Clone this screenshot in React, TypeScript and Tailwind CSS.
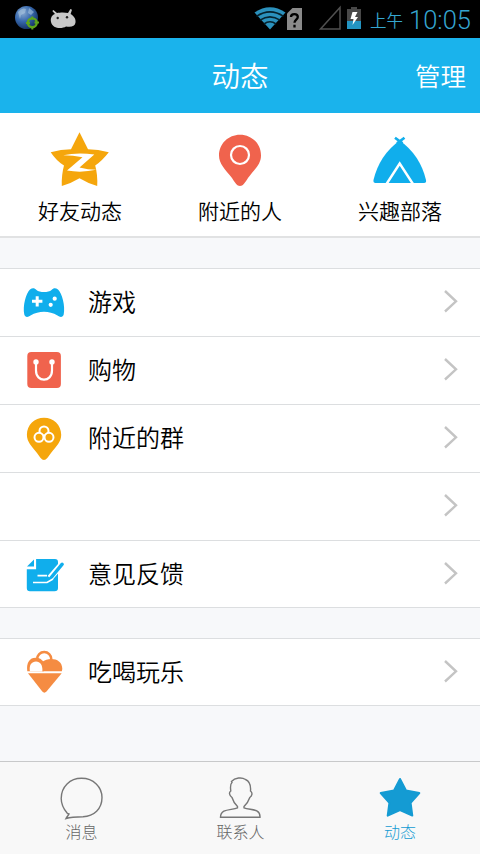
import React from "react";

type RowProps = {
  label?: string;
  icon?: React.ReactNode;
  last?: boolean;
};

const Chevron: React.FC = () => (
  <svg width="16" height="24" viewBox="0 0 16 24" fill="none" className="mr-[21px] mb-[3px]">
    <path d="M2 2 L13 12.3 L2 22.5" stroke="#c4c4c4" strokeWidth="2.4" />
  </svg>
);

const Row: React.FC<RowProps> = ({ label, icon, last }) => (
  <div
    className={`flex items-center bg-white border-b border-[#dcdee0] pl-[22px] ${
      last ? "h-[67px]" : "h-[68px]"
    }`}
  >
    <div className="w-11 h-[45px]">{icon}</div>
    <span className="ml-[22px] mb-[3px] flex-1 text-[24px] leading-[36px] text-black">{label}</span>
    <Chevron />
  </div>
);

const StatusBar: React.FC = () => (
  <div className="h-[38px] bg-black flex items-center justify-between text-[#35a6d0]">
    <svg width="80" height="38" viewBox="0 0 80 38">
      <defs>
        <radialGradient id="globe" cx="0.35" cy="0.3" r="0.75">
          <stop offset="0" stopColor="#86a8cf" />
          <stop offset="0.5" stopColor="#3768ad" />
          <stop offset="1" stopColor="#14305f" />
        </radialGradient>
      </defs>
      <circle cx="26.5" cy="17.5" r="11.5" fill="url(#globe)" />
      <path d="M18 12 q4 -5 8 -3 l-1 4 -4 2 -1 4z M29 8 l5 4 -3 3 -3 -2z" fill="#a9c4de" opacity="0.6" />
      <circle cx="32.3" cy="22.8" r="4.4" fill="none" stroke="#5ea51c" strokeWidth="2.4" />
      <path d="M26 23 h4 M34.5 22.5 h4.5 M32.3 16.5 v3 M32.3 26.5 v3" stroke="#5ea51c" strokeWidth="2" />
      {/* android head */}
      <path
        d="M51 22 C50 17 53 14.5 55 14 L52.3 11 L53.4 10 L57 13 C60 12.3 65 12.2 68 13 L70.4 9 L72 9.8 L70.6 14 C74 16 76 19 75.5 22.5 C75 26.5 71 27.5 66 26.5 C62 29 52.5 29 51 22Z"
        fill="#c8c8c8"
      />
      <circle cx="57.7" cy="18" r="1.2" fill="#222" />
      <circle cx="67" cy="17.3" r="1.2" fill="#222" />
    </svg>
    <div className="flex items-center h-full">
      <svg width="112" height="38" viewBox="252 0 112 38">
        <path d="M254.5 12.5 Q270 2 285.5 12.5 L270 29.5Z" fill="#2b91bd" />
        <path
          d="M256.5 16.3 Q270 7.5 283.5 16.3 M260 20.2 Q270 13.5 280 20.2 M264 24 Q270 19.5 276 24"
          stroke="#06222e"
          strokeWidth="1.6"
          fill="none"
        />
        <path d="M292.5 8 H302 V30 H287 V13.5Z" fill="#8a8a8a" />
        <path
          d="M291 17 C291 13.2 297.8 13.2 297.8 17 C297.8 19.6 294.5 19.8 294.5 22.8 M294.5 24.8 V27.4"
          stroke="#000"
          strokeWidth="2.3"
          fill="none"
        />
        <path d="M340 7.5 V29 H320.5Z" fill="none" stroke="#505050" strokeWidth="1.5" />
        <path d="M351 7 H357 V9 H361 V29 H347 V9 H351Z" fill="#484848" />
        <path d="M347 21 H361 V29 H347Z" fill="#2394c2" />
        <path d="M352.5 12 L350.5 19 H353.5 L352.5 25 L358 17 H355 L357.5 12Z" fill="#fff" />
      </svg>
      <span className="ml-[6px] mt-[2px] text-[16.5px] leading-[24px]">上午</span>
      <span className="ml-[6px] mr-[10px] mt-[2px] w-[61px] whitespace-nowrap font-[Roboto] text-[25.5px] leading-[36px]">
        10:05
      </span>
    </div>
  </div>
);

const ZoneStar: React.FC = () => (
  <svg width="60" height="56" viewBox="0 0 60 56">
    <path
      d="M29.5 1.2 L38 18.3 Q48 18.4 58.8 21.3 Q52 30 45.2 34.6 Q47.8 44 47.2 55 Q38 52.5 29.5 47.3 Q21 52.5 11.8 55 Q11.4 44 14 34.6 Q6.5 30 0.7 21.3 Q11 18.4 21 18.3Z"
      fill="#f5a60c"
    />
    <path
      d="M13.2 24.2 Q28 21.3 44.3 23.6 L29.5 36.4 Q38 38.5 46.3 38.8 Q32 42 17 39.6 L32.5 26.2 Q23 24.2 13.2 24.2Z"
      fill="#fff"
    />
  </svg>
);

const Pin: React.FC = () => (
  <svg width="60" height="56" viewBox="0 0 60 56">
    <path
      d="M30 55 C27 55 25 51.5 22 47 C15 38 9 33 9 24.5 C9 12.5 18.5 3.7 30 3.7 C41.5 3.7 51 12.5 51 24.5 C51 33 45 38 38 47 C35 51.5 33 55 30 55Z"
      fill="#f0634d"
    />
    <circle cx="30" cy="24" r="9" fill="none" stroke="#fff" strokeWidth="2.2" />
  </svg>
);

const Tent: React.FC = () => (
  <svg width="60" height="56" viewBox="0 0 60 56">
    <path d="M25 6.8 L32.5 12.4 M34.5 6.8 L27 12.4" stroke="#10aeec" strokeWidth="2.6" />
    <path
      d="M29.7 9.5 Q50 24 56 49 Q56.6 52 54 52 H5.6 Q3 52 3.5 49 Q9.5 24 29.7 9.5Z"
      fill="#10aeec"
    />
    <path d="M16.5 53 L29.7 32.5 L43 53" fill="none" stroke="#fff" strokeWidth="2.4" />
  </svg>
);

const Gamepad: React.FC = () => (
  <svg width="44" height="45" viewBox="0 0 44 45">
    <path
      d="M8 9.5 C10.5 7.8 12.5 8 14.5 10 C17.5 12.8 26.5 12.8 29.5 10 C31.5 8 33.5 7.8 36 9.5 C40 13 43.5 26 41.7 34.5 C41 37.5 38 37.5 35.5 35.5 C27 30.6 17 30.6 8.5 35.5 C6 37.5 3 37.5 2.3 34.5 C0.5 26 4 13 8 9.5Z"
      fill="#10aeec"
    />
    <path d="M10 21.3 H20.4 M15.2 16.2 V26.4" stroke="#fff" strokeWidth="3" />
    <circle cx="32.7" cy="18.7" r="2.1" fill="#fff" />
    <circle cx="28.7" cy="24.8" r="2.1" fill="#fff" />
  </svg>
);

const Bag: React.FC = () => (
  <svg width="44" height="45" viewBox="0 0 44 45">
    <rect x="5.3" y="4" width="33.6" height="36" rx="4" fill="#f0634d" />
    <path d="M14 14 V22.5 C14 34.7 30 34.7 30 22.5 V14" fill="none" stroke="#fff" strokeWidth="2.2" />
    <circle cx="14" cy="14" r="2.7" fill="#fff" />
    <circle cx="30" cy="14" r="2.7" fill="#fff" />
  </svg>
);

const GroupPin: React.FC = () => (
  <svg width="44" height="45" viewBox="0 0 44 45">
    <path
      d="M22 44 C19.5 44 18 41 15 37 C9.5 30 4.9 26 4.9 18.8 C4.9 9 12.5 1.8 22 1.8 C31.5 1.8 39.2 9 39.2 18.8 C39.2 26 34.5 30 29 37 C26 41 24.5 44 22 44Z"
      fill="#f5a60c"
    />
    <g fill="#f5a60c" stroke="#fff" strokeWidth="2">
      <circle cx="22" cy="14.9" r="4.5" />
      <circle cx="17" cy="21.3" r="4.5" />
      <circle cx="27" cy="21.3" r="4.5" />
    </g>
  </svg>
);

const Note: React.FC = () => (
  <svg width="44" height="45" viewBox="0 0 44 45">
    <path d="M14 7 H33 Q36 7 36 10 V36 Q36 39.3 32.5 39.3 H8 Q4.8 39.3 4.8 36 V17 H14Z" fill="#10aeec" />
    <path d="M5 14.5 L12 7.5 V14.5Z" fill="#10aeec" />
    <path d="M13.2 7 V16.3 H4" fill="none" stroke="#fff" strokeWidth="1.8" />
    <path d="M41 11 L28 26" fill="none" stroke="#fff" strokeWidth="6.4" />
    <path d="M40.2 12.2 L28.8 26" stroke="#10aeec" strokeWidth="3.4" strokeLinecap="round" />
    <path d="M27.2 25.2 L30 27.6 L25.5 30 Z" fill="#10aeec" />
    <path d="M15.5 23.6 H25 M11 30.5 H25 L31 27" fill="none" stroke="#fff" strokeWidth="1.6" />
  </svg>
);

const IceCream: React.FC = () => (
  <svg width="44" height="45" viewBox="0 0 44 45">
    <circle cx="22.2" cy="9.2" r="7.1" fill="#fff" stroke="#f58c42" strokeWidth="2.5" />
    {/* scoops */}
    <path d="M20 21.2 V12 C27 6.5 40.3 8 40.3 19 L39.8 21.2Z" fill="#f58c42" />
    <path d="M5.3 21.2 C4 12.5 8 7.8 13.5 7.8 C17.5 7.8 20.5 9.5 22 13.5 V21.2Z" fill="#f58c42" />
    <path d="M7.9 21.2 C6.8 15 9.8 11.6 14 11.6 C18.3 11.6 20.6 15 20.4 21.2Z" fill="#fff" />
    <path d="M6 23.2 H39.7 L24.5 41.6 Q22.3 43.8 20.3 41.6Z" fill="#f58c42" />
  </svg>
);

const shortcuts = [
  { label: "好友动态", icon: <ZoneStar /> },
  { label: "附近的人", icon: <Pin /> },
  { label: "兴趣部落", icon: <Tent /> },
];

const tabs = [
  {
    label: "消息",
    color: "text-[#666]",
    shift: "pl-[3px]",
    icon: (
      <path
        d="M7.3 38.3 C4 34.5 1.2 29.8 1.2 23.5 C1.2 11.5 10 3.3 21.5 3.3 C33.5 3.3 42 11.8 42 22.6 C42 34 34 41.5 23 41.8 C17 41.8 11.5 41.8 6 43.5 C6.8 42 8.5 40.2 9 39Z"
        fill="none"
        stroke="#777"
        strokeWidth="1.4"
      />
    ),
  },
  {
    label: "联系人",
    color: "text-[#666]",
    shift: "pl-[1px]",
    icon: (
      <path
        d="M12.5 6.5 C16 2.5 23 2 26.5 4.5 C31 6.5 32 10.5 31.5 16 C34 18 33 21 30.8 22.5 C29.5 26.5 27.5 29 25 31.5 V32.8 C31 35.5 41.5 33 41 42.3 H1.5 C1.5 33 13 35.5 18.5 32.8 V31.5 C15.5 28.5 14 26 13 22.5 C10.5 20.5 9.5 17.5 11.8 16 C11.3 12.5 11.2 9 13 7.5Z"
        fill="none"
        stroke="#777"
        strokeWidth="1.4"
      />
    ),
  },
  {
    label: "动态",
    color: "text-[#149bd3]",
    shift: "",
    icon: (
      <path
        d="M22 4 L28 15.5 L41.3 18 L32.6 27.8 L34.3 40.6 L22 35.2 L9.7 40.6 L11.4 27.8 L2.7 18 L16 15.5Z"
        fill="#149bd3"
        stroke="#149bd3"
        strokeWidth="2"
        strokeLinejoin="round"
      />
    ),
  },
];

const App: React.FC = () => {
  return (
    <div className="w-[480px] h-[854px] flex flex-col overflow-hidden bg-[#f7f8fa] font-['Noto_Sans_CJK_SC',sans-serif] font-[350]">
      <StatusBar />

      {/* title bar */}
      <div className="h-[75px] bg-[#1ab3ec] grid grid-cols-3 items-center pb-[2px] text-white">
        <span />
        <span className="text-center text-[28.5px] leading-[40px]">动态</span>
        <span className="pr-[14px] text-right text-[25.5px] leading-[40px]">管理</span>
      </div>

      {/* shortcuts */}
      <div className="h-[125px] grid grid-cols-3 bg-white border-b-2 border-[#e1e2e3] pt-[18px]">
        {shortcuts.map((s) => (
          <div key={s.label} className="flex flex-col items-center">
            {s.icon}
            <span className="mt-[7px] text-[21px] leading-[32px] text-black">{s.label}</span>
          </div>
        ))}
      </div>

      {/* list */}
      <div className="mt-[30px] border-t border-[#dcdee0]">
        <Row label="游戏" icon={<Gamepad />} />
        <Row label="购物" icon={<Bag />} />
        <Row label="附近的群" icon={<GroupPin />} />
        <Row />
        <Row label="意见反馈" icon={<Note />} last />
      </div>

      <div className="mt-[30px] border-t border-[#dcdee0]">
        <Row label="吃喝玩乐" icon={<IceCream />} last />
      </div>

      {/* tabs */}
      <div className="mt-auto h-[93px] grid grid-cols-3 bg-[#f8f8f8] border-t border-[#c8c9ca] pt-[13px] font-light">
        {tabs.map((t) => (
          <div key={t.label} className={`flex flex-col items-center ${t.shift} ${t.color}`}>
            <svg width="44" height="46" viewBox="0 0 44 46">
              {t.icon}
            </svg>
            <span className="-mt-[2px] text-[16px] leading-[24px]">{t.label}</span>
          </div>
        ))}
      </div>
    </div>
  );
};

export default App;
